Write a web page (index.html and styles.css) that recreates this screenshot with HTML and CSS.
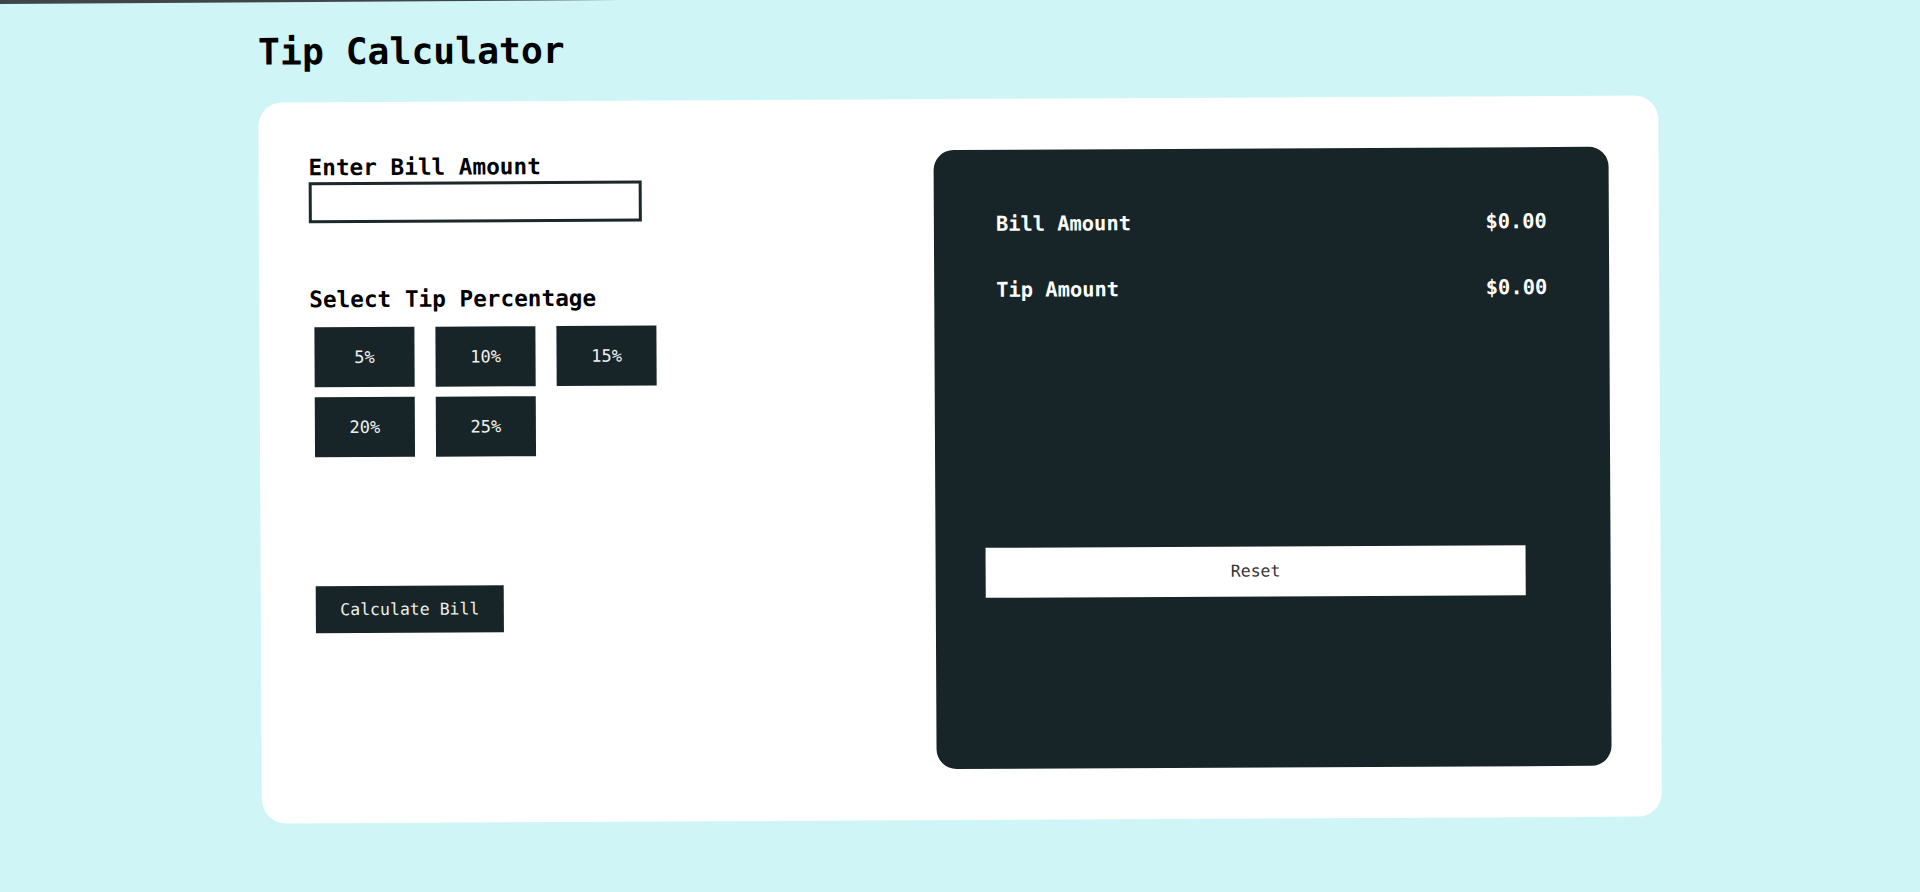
FILE: index.html
```html
<!DOCTYPE html>
<html lang="en">
<head>
<meta charset="utf-8">
<title>Tip Calculator</title>
<link rel="stylesheet" href="styles.css">
</head>
<body>
<div class="app">
  <div class="container">
    <h1 class="title">Tip Calculator</h1>
    <main class="card">
      <section class="inputs">
        <label class="label bill-label" for="bill">Enter Bill Amount</label>
        <input class="bill-input" id="bill" type="text">
        <h3 class="label tip-label">Select Tip Percentage</h3>
        <div class="tips">
          <button class="tip-btn">5%</button>
          <button class="tip-btn">10%</button>
          <button class="tip-btn">15%</button>
          <button class="tip-btn">20%</button>
          <button class="tip-btn">25%</button>
        </div>
        <button class="calc-btn">Calculate Bill</button>
      </section>
      <section class="result">
        <div class="row row-first">
          <span>Bill Amount</span>
          <span>$0.00</span>
        </div>
        <div class="row">
          <span>Tip Amount</span>
          <span>$0.00</span>
        </div>
        <button class="reset-btn">Reset</button>
      </section>
    </main>
  </div>
</div>
</body>
</html>
```

FILE: styles.css
```css
html, body {
  margin: 0;
  padding: 0;
  background: #cff5f6;
  font-family: "DejaVu Sans Mono", "Liberation Mono", monospace;
  color: #000;
}

body::before {
  content: "";
  position: fixed;
  top: 0;
  left: 0;
  width: 620px;
  height: 4px;
  background: #3f4648;
  clip-path: polygon(0 0, 100% 0, 0 100%);
  z-index: 5;
}

.app {
  min-height: 100vh;
  box-sizing: border-box;
  padding-top: 28px;
  transform: rotate(-0.29deg);
}

.container {
  width: 1400px;
  margin: 0 auto;
}

.title {
  margin: 0 0 28.5px 0;
  font-size: 36.4px;
  line-height: 42px;
  font-weight: bold;
}

.card {
  box-sizing: border-box;
  height: 721px;
  background: #fff;
  border-radius: 24px;
  padding: 50px;
  display: grid;
  grid-template-columns: 625px 1fr;
}

.inputs {
  display: flex;
  flex-direction: column;
  align-items: flex-start;
}

.label {
  display: block;
  margin: 0;
  font-size: 22.7px;
  line-height: 27px;
  font-weight: bold;
}

.bill-label {
  margin-top: 2.5px;
}

.bill-input {
  box-sizing: border-box;
  margin-top: 1px;
  width: 333px;
  height: 41px;
  border: 3px solid #1c282b;
  padding: 0 6px;
  font-family: inherit;
  font-size: 16px;
  outline: none;
}

.tip-label {
  margin-top: 62.5px;
}

.tips {
  margin: 14px 0 0 5px;
  width: 342px;
  display: flex;
  flex-wrap: wrap;
  gap: 10px 21px;
}

.tip-btn,
.calc-btn {
  background: #182528;
  color: #eef0ee;
  border: none;
  font-family: inherit;
  cursor: pointer;
}

.tip-btn {
  width: 100px;
  height: 60px;
  font-size: 17px;
  padding: 0;
}

.calc-btn {
  margin: 129.5px 0 0 5px;
  width: 188px;
  height: 47px;
  font-size: 16.5px;
  padding: 0;
}

.result {
  box-sizing: border-box;
  margin-top: 1px;
  height: 619px;
  background: #182528;
  border-radius: 20px;
  padding: 62.5px 50px 0;
  color: #fff;
}

.row {
  display: flex;
  justify-content: space-between;
  padding: 0 12px;
  font-size: 20.4px;
  line-height: 24px;
  font-weight: bold;
  margin-top: 42px;
}

.row-first {
  margin-top: 0;
}

.reset-btn {
  display: block;
  margin-top: 245.5px;
  width: 540px;
  height: 50px;
  background: #fff;
  color: #333;
  border: none;
  font-family: inherit;
  font-size: 16.5px;
  padding: 0;
  cursor: pointer;
}
```
